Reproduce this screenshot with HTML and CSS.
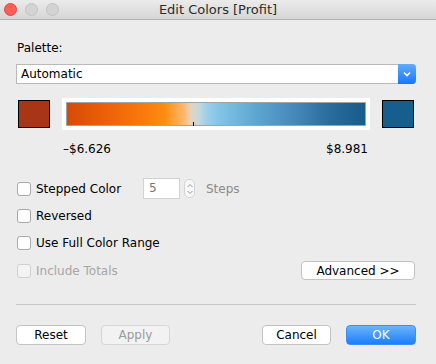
FILE: index.html
```html
<!DOCTYPE html>
<html lang="en">
<head>
    <meta charset="UTF-8">
    <title>Edit Colors [Profit]</title>
    <link rel="stylesheet" href="styles.css">
</head>
<body>
    <div class="window">
        <div class="titlebar">
            <div class="lights">
                <span class="light close"></span>
                <span class="light"></span>
                <span class="light"></span>
            </div>
            <div class="title">Edit Colors [Profit]</div>
        </div>

        <div class="content">
            <div class="label">Palette:</div>

            <div class="select">
                <span class="select-text">Automatic</span>
                <span class="select-btn">
                    <svg width="10" height="8" viewBox="0 0 10 8"><path d="M2 2.5 L5 5.5 L8 2.5" fill="none" stroke="#fff" stroke-width="1.6"/></svg>
                </span>
            </div>

            <div class="color-row">
                <div class="swatch swatch-low"></div>
                <div class="ramp-panel">
                    <div class="ramp">
                        <span class="tick"></span>
                    </div>
                </div>
                <div class="swatch swatch-high"></div>
            </div>

            <div class="values">
                <span>–$6.626</span>
                <span>$8.981</span>
            </div>

            <div class="options">
                <div class="opt">
                    <span class="check"></span>
                    <span class="opt-text stepped">Stepped Color</span>
                    <span class="num">5</span>
                    <span class="stepper">
                        <svg width="8" height="14" viewBox="0 0 8 14"><path d="M1.5 5 L4 2.5 L6.5 5 M1.5 9 L4 11.5 L6.5 9" fill="none" stroke="#9a9a9a" stroke-width="1"/></svg>
                    </span>
                    <span class="steps">Steps</span>
                </div>
                <div class="opt">
                    <span class="check"></span>
                    <span class="opt-text">Reversed</span>
                </div>
                <div class="opt">
                    <span class="check"></span>
                    <span class="opt-text">Use Full Color Range</span>
                </div>
                <div class="opt disabled">
                    <span class="check"></span>
                    <span class="opt-text">Include Totals</span>
                    <button class="btn advanced">Advanced &gt;&gt;</button>
                </div>
            </div>

            <div class="separator"></div>

            <div class="footer">
                <button class="btn">Reset</button>
                <button class="btn btn-disabled">Apply</button>
                <span class="spacer"></span>
                <button class="btn">Cancel</button>
                <button class="btn btn-primary">OK</button>
            </div>
        </div>
    </div>
</body>
</html>
```

FILE: styles.css
```css
body {
    margin: 0;
    background: #ececec;
    font-family: 'DejaVu Sans', sans-serif;
    font-size: 12px;
    color: #000;
}

.window {
    width: 436px;
    height: 364px;
    background: #ececec;
}

.titlebar {
    position: relative;
    height: 19px;
    background: linear-gradient(#ebebeb, #d6d6d6);
    border-bottom: 1px solid #b4b4b4;
    display: flex;
    align-items: center;
    justify-content: center;
}

.lights {
    position: absolute;
    left: 4px;
    top: 3px;
    display: flex;
    gap: 8px;
}

.light {
    width: 11px;
    height: 11px;
    border-radius: 50%;
    background: #d3d3d3;
    border: 0.5px solid #c2c2c2;
}

.light.close {
    background: #fc5f57;
    border-color: #e14640;
}

.title {
    font-size: 13px;
    color: #2c2c2c;
}

.content {
    padding: 0 20px 0 16px;
}

.label {
    margin-top: 20px;
    line-height: 16px;
    padding-left: 1px;
}

.select {
    margin-top: 8px;
    height: 18px;
    background: #fff;
    border: 1px solid #b9b9b9;
    border-right: none;
    border-radius: 0 4px 4px 0;
    display: flex;
    align-items: center;
}

.select-text {
    flex: 1;
    padding-left: 4px;
}

.select-btn {
    width: 18px;
    height: 20px;
    margin-top: -1px;
    margin-bottom: -1px;
    border-radius: 0 4px 4px 0;
    background: linear-gradient(#62abfb, #1877fb);
    display: flex;
    align-items: center;
    justify-content: center;
}

.color-row {
    margin-top: 14px;
    height: 32px;
    display: flex;
    align-items: center;
    gap: 12px;
    padding-left: 2px;
}

.swatch {
    width: 30px;
    height: 26px;
    border: 1px solid #000;
}

.swatch-low {
    background: #a93517;
}

.swatch-high {
    background: #155e8e;
}

.ramp-panel {
    width: 300px;
    height: 24px;
    padding: 4px;
    background: #fff;
}

.ramp {
    position: relative;
    height: 22px;
    border: 1px solid #a3a3a3;
    background: linear-gradient(to right, #d64a06 0%, #ee6209 14%, #fb7c0c 27%, #ff8d12 33%, #fdbb76 39.5%, #e6d3bd 41.5%, #c7d8df 44%, #9ccfe8 47%, #84c4e6 51%, #5ea7d2 63%, #4689bb 76%, #2a6d9c 88%, #185c8b 100%);
}

.tick {
    position: absolute;
    left: 126px;
    bottom: -1px;
    width: 1px;
    height: 4px;
    background: #000;
}

.values {
    margin-top: 11px;
    line-height: 16px;
    display: flex;
    justify-content: space-between;
    padding: 0 48px 0 47px;
}

.options {
    margin-top: 18px;
}

.opt {
    height: 27px;
    display: flex;
    align-items: center;
    padding-left: 1px;
}

.opt:nth-child(n+2) {
    height: 27.5px;
}

.check {
    width: 12px;
    height: 12px;
    background: #fff;
    border: 1px solid #a9a9a9;
    border-radius: 3px;
    margin-right: 5px;
}

.opt-text.stepped {
    width: 107px;
}

.num {
    width: 30px;
    height: 19px;
    line-height: 19px;
    padding-left: 5px;
    background: #fff;
    border: 1px solid #d2d2d2;
    color: #777;
}

.stepper {
    width: 9px;
    height: 17px;
    margin-left: 4px;
    border: 1px solid #d4d4d4;
    border-radius: 5px;
    background: #f7f7f7;
    display: flex;
    align-items: center;
    justify-content: center;
}

.steps {
    margin-left: 11px;
    color: #8a8a8a;
}

.opt.disabled .check {
    background: #f3f3f3;
    border-color: #d0d0d0;
}

.opt.disabled .opt-text {
    color: #a6a6a6;
}

.btn {
    height: 20px;
    width: 70px;
    padding: 0;
    font-family: inherit;
    font-size: 12px;
    color: #000;
    background: #fff;
    border: 1px solid #c3c3c3;
    border-radius: 4px;
}

.advanced {
    margin-left: auto;
    margin-right: 1px;
    width: 114px;
    height: 19px;
}

.separator {
    margin-top: 19px;
    height: 1px;
    background: #c6c6c6;
}

.footer {
    margin-top: 20px;
    display: flex;
    gap: 15px;
}

.spacer {
    flex: 1;
}

.btn-disabled {
    width: 69px;
    background: #f2f2f2;
    border-color: #d6d6d6;
    color: #9a9a9a;
}

.footer .btn:nth-child(4) {
    width: 69px;
}

.btn-primary {
    color: #fff;
    border-color: #3b8df7;
    background: linear-gradient(#6db3fb, #1a7ffb);
}
```
